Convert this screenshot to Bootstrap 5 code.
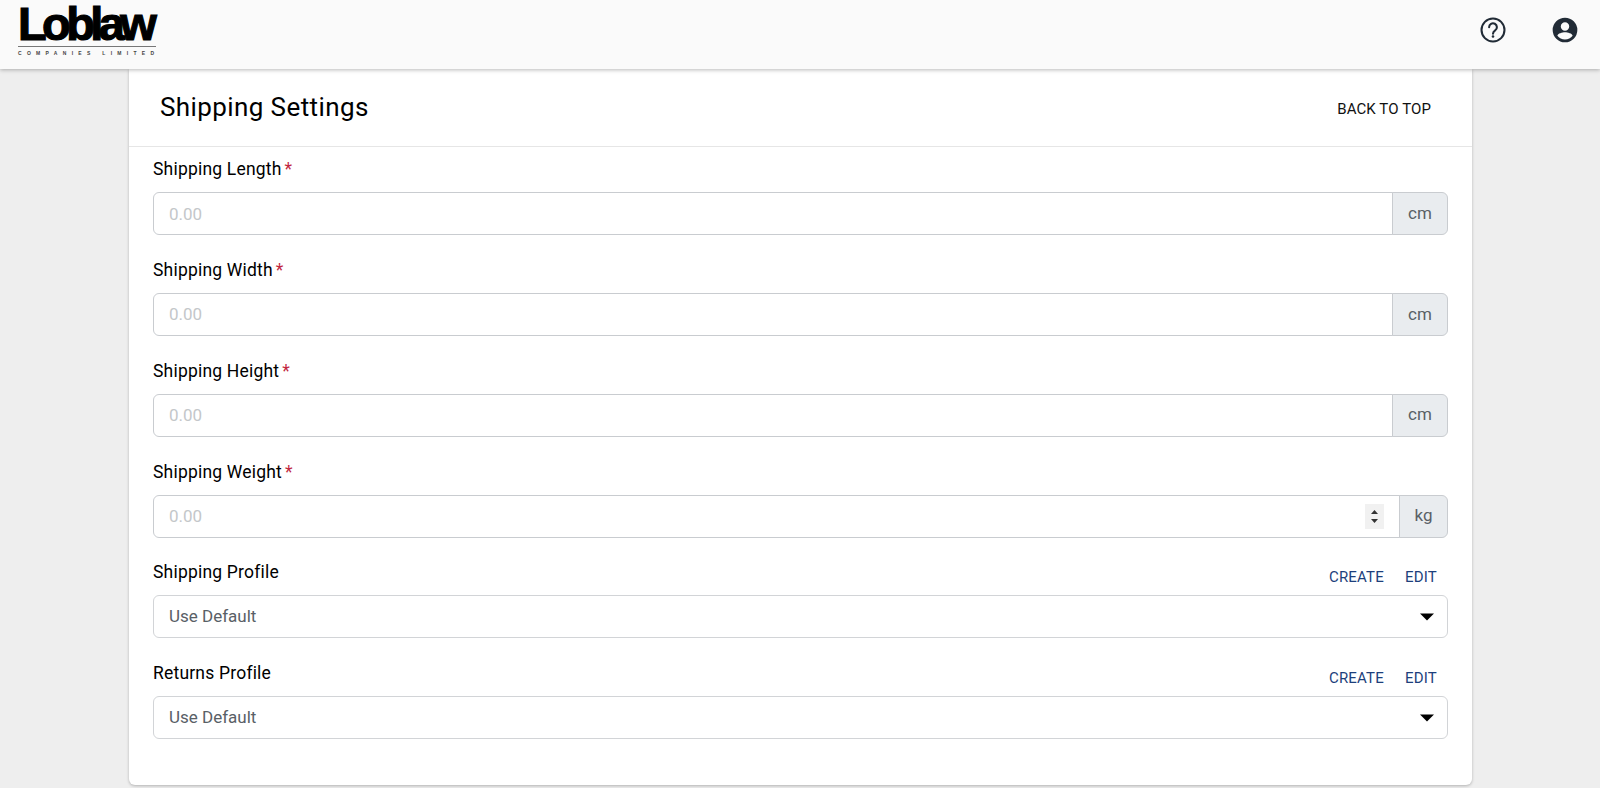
<!DOCTYPE html>
<html lang="en">

<head>
    <meta charset="UTF-8">
    <meta name="viewport" content="width=device-width, initial-scale=1.0">
    <title>Shipping Settings</title>
    <link href="https://cdn.jsdelivr.net/npm/bootstrap@5.3.0/dist/css/bootstrap.min.css" rel="stylesheet">
    <style>
        html, body {
            height: 100%;
            overflow: hidden;
        }

        body {
            background: #eeeeee;
            font-family: Roboto, "Liberation Sans", sans-serif;
            color: #000;
        }

        .top-bar {
            height: 69px;
            background: #fafafa;
            box-shadow: 0 1px 4px rgba(0, 0, 0, .28);
            position: relative;
            z-index: 2;
            padding: 0 22px 0 18px;
        }

        .logo-box {
            width: 138px;
            color: #000;
            margin-bottom: 1px;
        }

        .logo-word {
            font-family: "Liberation Sans", sans-serif;
            font-weight: 700;
            font-size: 47px;
            line-height: 32px;
            height: 38px;
            letter-spacing: -4.6px;
            -webkit-text-stroke: 1.2px #000;
            white-space: nowrap;
        }

        .logo-sub {
            border-top: 1px solid #777;
            font-family: "Liberation Sans", sans-serif;
            font-size: 5px;
            line-height: 13px;
            font-weight: 700;
            letter-spacing: 5.3px;
            color: #444;
            white-space: nowrap;
        }

        .bar-icon {
            width: 26px;
            height: 26px;
            color: #212b36;
        }

        .icon-gap {
            gap: 46px;
            margin-top: -9px;
        }

        .page-sheet {
            width: 1343px;
            margin-left: 129px;
            height: 716px;
            background: #fff;
            border-radius: 0 0 6px 6px;
            box-shadow: 0 1px 3px rgba(0, 0, 0, .25);
        }

        .sheet-head {
            height: 78px;
            border-bottom: 1px solid #e6e6e6;
            padding: 0 41px 0 31px;
        }

        .sheet-title {
            font-size: 26px;
            font-weight: 400;
            letter-spacing: .4px;
            margin: 0;
            color: #000;
        }

        .top-link {
            font-size: 15px;
            font-weight: 400;
            letter-spacing: .1px;
            color: #111;
            text-decoration: none;
            margin-top: 3px;
        }

        .sheet-body {
            padding: 10px 24px 0;
        }

        .field-row {
            height: 100.85px;
        }

        .field-label {
            font-size: 17.5px;
            line-height: 24px;
            height: 24px;
            margin: 0 0 11px;
            letter-spacing: .2px;
            color: #000;
        }

        .req-star {
            color: #c2273f;
            margin-left: 3px;
        }

        .sheet-body .form-control,
        .sheet-body .form-select,
        .sheet-body .input-group-text {
            height: 43px;
            font-size: 17px;
            border-color: #c9ccd0;
            border-radius: 6px;
        }

        .sheet-body .input-group .form-control {
            border-top-right-radius: 0;
            border-bottom-right-radius: 0;
            padding-left: 15px;
        }

        .sheet-body .input-group-text {
            border-top-left-radius: 0;
            border-bottom-left-radius: 0;
            background: #e9ecef;
            color: #596066;
            padding: 0 15px;
            width: 56px;
            justify-content: center;
        }

        .sheet-body .input-group-text.unit-kg {
            width: 49px;
        }

        .form-control::placeholder {
            color: #c4c7ca;
            opacity: 1;
        }

        .sheet-body .form-select {
            color: #596066;
            padding-left: 15px;
            border-color: #d2d4d7;
            background-image: url("data:image/svg+xml,%3csvg xmlns='http://www.w3.org/2000/svg' viewBox='0 0 14 8'%3e%3cpath fill='%23000' d='M0 .5h14L7 7.500z'/%3e%3c/svg%3e");
            background-size: 14px 8px;
            background-position: right 13px center;
        }

        .spin-box {
            position: absolute;
            right: 64px;
            top: 9px;
            width: 19px;
            height: 25px;
            background: #f1f1f1;
            z-index: 5;
        }

        .action-link {
            font-size: 15px;
            font-weight: 400;
            letter-spacing: .2px;
            color: #1d3f7c;
            text-decoration: none;
        }

        .action-set {
            gap: 21px;
            padding-right: 11px;
            padding-top: 6px;
        }
    </style>
</head>

<body>

    <!-- Top bar -->
    <nav class="top-bar d-flex justify-content-between align-items-center">
        <a class="logo-box d-block text-decoration-none" href="#">
            <div class="logo-word">Loblaw</div>
            <div class="logo-sub">COMPANIES LIMITED</div>
        </a>
        <div class="d-flex align-items-center icon-gap">
            <svg class="bar-icon" viewBox="0 0 24 24" fill="none" stroke="currentColor" stroke-width="1.9">
                <circle cx="12" cy="12" r="10.6"></circle>
                <path d="M8.400 9.400a3.600 3.600 0 1 1 5.600 3c-1.300.9-2 1.500-2 3" stroke-linecap="round"></path>
                <circle cx="12" cy="18" r="1.2" fill="currentColor" stroke="none"></circle>
            </svg>
            <svg class="bar-icon" viewBox="0 0 24 24" fill="currentColor">
                <path d="M12 .6a11.400 11.400 0 1 0 0 22.800A11.400 11.400 0 0 0 12 .6zm0 4.200a3.900 3.900 0 1 1 0 7.800 3.900 3.900 0 0 1 0-7.800zm0 16c-2.900 0-5.400-1.400-7-3.600.1-2.100 4.700-3.200 7-3.200s6.900 1.100 7 3.200c-1.600 2.200-4.100 3.600-7 3.600z"></path>
            </svg>
        </div>
    </nav>

    <main class="page-sheet">
        <div class="sheet-head d-flex justify-content-between align-items-center">
            <h1 class="sheet-title">Shipping Settings</h1>
            <a href="#" class="top-link">BACK TO TOP</a>
        </div>

        <form class="sheet-body">
            <div class="field-row">
                <label class="field-label d-block" for="shipLength">Shipping Length<span class="req-star">*</span></label>
                <div class="input-group">
                    <input type="text" class="form-control" id="shipLength" placeholder="0.00">
                    <span class="input-group-text">cm</span>
                </div>
            </div>
            <div class="field-row">
                <label class="field-label d-block" for="shipWidth">Shipping Width<span class="req-star">*</span></label>
                <div class="input-group">
                    <input type="text" class="form-control" id="shipWidth" placeholder="0.00">
                    <span class="input-group-text">cm</span>
                </div>
            </div>
            <div class="field-row">
                <label class="field-label d-block" for="shipHeight">Shipping Height<span class="req-star">*</span></label>
                <div class="input-group">
                    <input type="text" class="form-control" id="shipHeight" placeholder="0.00">
                    <span class="input-group-text">cm</span>
                </div>
            </div>
            <div class="field-row">
                <label class="field-label d-block" for="shipWeight">Shipping Weight<span class="req-star">*</span></label>
                <div class="input-group position-relative">
                    <input type="text" class="form-control" id="shipWeight" placeholder="0.00">
                    <span class="spin-box d-flex align-items-center justify-content-center">
                        <svg width="9" height="15" viewBox="0 0 9 15" fill="#333">
                            <path d="M4.500 1 8 5H1z"></path>
                            <path d="M4.500 14 8 10H1z"></path>
                        </svg>
                    </span>
                    <span class="input-group-text unit-kg">kg</span>
                </div>
            </div>
            <div class="field-row">
                <div class="d-flex justify-content-between">
                    <label class="field-label" for="shipProfile">Shipping Profile</label>
                    <div class="d-flex action-set">
                        <a href="#" class="action-link">CREATE</a>
                        <a href="#" class="action-link">EDIT</a>
                    </div>
                </div>
                <select class="form-select" id="shipProfile">
                    <option>Use Default</option>
                </select>
            </div>
            <div class="field-row">
                <div class="d-flex justify-content-between">
                    <label class="field-label" for="returnProfile">Returns Profile</label>
                    <div class="d-flex action-set">
                        <a href="#" class="action-link">CREATE</a>
                        <a href="#" class="action-link">EDIT</a>
                    </div>
                </div>
                <select class="form-select" id="returnProfile">
                    <option>Use Default</option>
                </select>
            </div>
        </form>
    </main>

    <script src="https://cdn.jsdelivr.net/npm/bootstrap@5.3.0/dist/js/bootstrap.bundle.min.js"></script>
</body>

</html>
